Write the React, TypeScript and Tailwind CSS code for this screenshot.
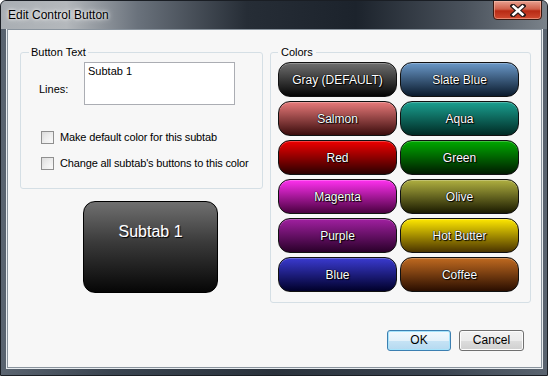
import React from "react";

const colors: { name: string; from: string; to: string }[] = [
  { name: "Gray (DEFAULT)", from: "#6e6e6e", to: "#050505" },
  { name: "Slate Blue", from: "#6a98c8", to: "#0a1a2c" },
  { name: "Salmon", from: "#e87a7a", to: "#3a0c0c" },
  { name: "Aqua", from: "#1aa090", to: "#002a24" },
  { name: "Red", from: "#f00000", to: "#2a0000" },
  { name: "Green", from: "#00aa00", to: "#001a00" },
  { name: "Magenta", from: "#ff30f0", to: "#4a0040" },
  { name: "Olive", from: "#b0b040", to: "#1a1a00" },
  { name: "Purple", from: "#a020a0", to: "#2a002a" },
  { name: "Hot Butter", from: "#ffe800", to: "#4a3400" },
  { name: "Blue", from: "#3a3ad0", to: "#00002a" },
  { name: "Coffee", from: "#c06a20", to: "#2a0e00" },
];

function Checkbox({ label }: { label: string }) {
  return (
    <div className="flex items-center gap-[6px] h-[14px] whitespace-nowrap">
      <div className="w-[13px] h-[13px] shrink-0 border border-[#8f8f8f] bg-[linear-gradient(135deg,#dcdcdc,#fafafa)] p-[2px]">
        <div className="w-full h-full bg-[linear-gradient(135deg,#e4e4e4,#f8f8f8)]" />
      </div>
      <span className="tracking-[-0.15px]">{label}</span>
    </div>
  );
}

export default function App() {
  return (
    <div
      className="w-[548px] h-[376px] relative overflow-hidden bg-[linear-gradient(90deg,#5a6470_0%,#3a4450_20%,#2a323c_50%,#3a4450_80%,#5a6470_100%)] rounded-t-[6px] border border-[#1a1e24] flex flex-col"
      style={{ fontFamily: '"Liberation Sans", Arial, sans-serif' }}
    >
      {/* title bar */}
      <div className="h-[28px] shrink-0 flex items-start relative bg-[linear-gradient(90deg,#a9aeb3_0%,#b4b8bc_12%,#6a727c_25%,#262d36_45%,#1c232c_65%,#4a525c_85%,#7a828a_100%)]">
        <div className="ml-[7px] mt-[7px] text-[12px] leading-[14px] text-black [text-shadow:0_0_6px_#fff,0_0_3px_#fff]">
          Edit Control Button
        </div>
        <div className="ml-auto mr-[5px] w-[49px] h-[20px] mt-[-1px] rounded-b-[4px] border border-[#3a1810] bg-[linear-gradient(180deg,#e8a090_0%,#d0604a_45%,#b82a14_55%,#d04a30_100%)] flex items-center justify-center shadow-[inset_0_0_0_1px_rgba(255,200,180,0.5)]">
          <svg width="16" height="13" viewBox="0 0 16 13">
            <path d="M3 2 L13 11 M13 2 L3 11" stroke="#2a1a1a" strokeWidth="5" strokeLinecap="square" />
            <path d="M3.5 2.5 L12.5 10.5 M12.5 2.5 L3.5 10.5" stroke="#ffffff" strokeWidth="2.6" strokeLinecap="square" />
          </svg>
        </div>
      </div>

      {/* client */}
      <div className="mx-[6px] border border-[#8a949e] bg-[#f7f7f7] w-[535px] h-[339px] shadow-[0_0_0_1px_#e8ecef] text-[11px] leading-[13px] text-black">
        <div className="pl-[12px] pt-[15px] flex gap-[7px]">
          {/* left column */}
          <div className="w-[243px] flex flex-col">
            <fieldset className="border border-[#d5dfe5] rounded-[3px] h-[144px] px-[10px]">
              <legend className="ml-[-2px] px-[2px] text-[11px] leading-[14px] text-black">Button Text</legend>
              <div className="flex items-start mt-[3px]">
                <span className="ml-[8px] mt-[21px] w-[44px]">Lines:</span>
                <div className="ml-[1px] w-[151px] h-[43px] border border-[#abadb3] bg-white px-[3px] pt-[2px]">Subtab 1</div>
              </div>
              <div className="mt-[25px] ml-[10px] flex flex-col gap-[12px]">
                <Checkbox label="Make default color for this subtab" />
                <Checkbox label="Change all subtab's buttons to this color" />
              </div>
            </fieldset>
            <div className="mt-[12px] ml-[63px] w-[135px] h-[92px] rounded-[12px] border border-black bg-[linear-gradient(180deg,#707070_0%,#3a3a3a_45%,#060606_100%)] flex justify-center pt-[20px]">
              <span className="text-white text-[16px] leading-[20px] [text-shadow:1px_1px_1px_#000,0_0_1px_#88a]">Subtab 1</span>
            </div>
          </div>

          {/* right group */}
          <fieldset className="border border-[#d5dfe5] rounded-[3px] w-[261px] h-[258px] pl-[7px]">
            <legend className="ml-[0px] px-[3px] text-[11px] leading-[14px] text-black">Colors</legend>
            <div className="mt-[3px] grid grid-cols-[119px_119px] gap-x-[3px] gap-y-[4px]">
              {colors.map((c) => (
                <div
                  key={c.name}
                  className="h-[35px] rounded-[12px] border border-[#111] flex items-center justify-center text-white text-[12px] leading-[14px] [text-shadow:1px_1px_1px_#000,0_0_1px_#000,0_0_1px_#000] shadow-[inset_0_1px_0_rgba(255,255,255,0.25)]"
                  style={{ background: `linear-gradient(180deg, ${c.from} 0%, ${c.to} 100%)` }}
                >
                  {c.name}
                </div>
              ))}
            </div>
          </fieldset>
        </div>

        {/* footer */}
        <div className="flex justify-end gap-[8px] pr-[17px] mt-[27px]">
          <div className="w-[64px] h-[21px] rounded-[3px] border border-[#3c7fb1] bg-[linear-gradient(180deg,#f2f9fd_0%,#e3f1fa_50%,#c6e3f5_51%,#b5d9f0_100%)] shadow-[inset_0_0_0_1px_#a6e3fb] flex items-center justify-center text-[12px]">
            OK
          </div>
          <div className="w-[65px] h-[21px] rounded-[3px] border border-[#707070] bg-[linear-gradient(180deg,#f2f2f2_0%,#ebebeb_50%,#dddddd_51%,#cfcfcf_100%)] shadow-[inset_0_0_0_1px_#fcfcfc] flex items-center justify-center text-[12px]">
            Cancel
          </div>
        </div>
      </div>
    </div>
  );
}
